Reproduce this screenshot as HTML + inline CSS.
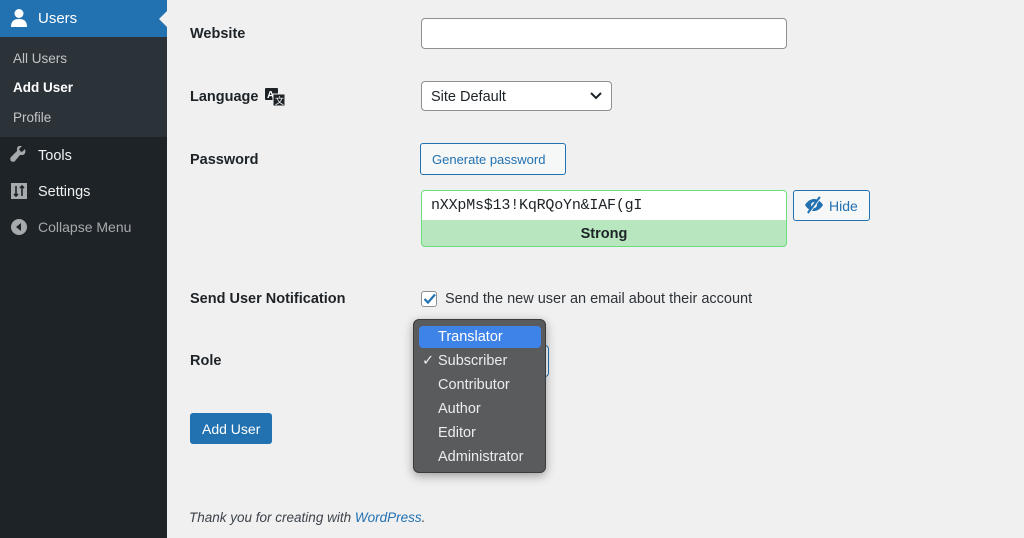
<!DOCTYPE html>
<html><head><style>
*{margin:0;padding:0;box-sizing:border-box}
body{width:1024px;height:538px;overflow:hidden;background:#f0f0f1;font-family:"Liberation Sans",sans-serif;color:#1d2327;position:relative}
.side{position:absolute;left:0;top:0;width:167px;height:538px;background:#1d2327}
.users{position:absolute;left:0;top:0;width:167px;height:37px;background:#2271b1;color:#fff;font-size:15px}
.users span{position:absolute;left:38px;top:10px}
.arrow{position:absolute;right:0;top:11px;width:0;height:0;border-top:8px solid transparent;border-bottom:8px solid transparent;border-right:8px solid #f0f0f1}
.sub{position:absolute;left:0;top:37px;width:167px;height:100px;background:#2c3338;font-size:13.5px}
.sub div{position:absolute;left:13px;color:#c3c4c7}
.m{position:absolute;left:38px;color:#f0f0f1;font-size:14.5px}
.a{position:absolute;font-size:14.5px;font-weight:bold}
.box{position:absolute;background:#fff;border:1px solid #8c8f94;border-radius:4px}
.btn{position:absolute;border:1px solid #2271b1;color:#2271b1;border-radius:3px;background:#f6f7f7;font-size:13px}
.dd{position:absolute;left:413px;top:319px;width:133px;height:154px;background:#5a5b5d;border:1px solid #3a3b3d;border-radius:6px;box-shadow:0 3px 10px rgba(0,0,0,.35);color:#ececec;font-size:14.5px}
.dd div{position:absolute;left:24px}
</style></head><body>
<div class="side">
 <div class="users">
  <svg style="position:absolute;left:10px;top:8px" width="18" height="20" viewBox="0 0 18 20"><circle cx="9" cy="5.5" r="4.5" fill="#fff"/><path d="M1 19c0-6 3-8 8-8s8 2 8 8z" fill="#fff"/></svg>
  <span>Users</span><div class="arrow"></div></div>
 <div class="sub"><div style="top:14px">All Users</div><div style="top:43px;color:#fff;font-weight:bold">Add User</div><div style="top:73px">Profile</div></div>
 <svg style="position:absolute;left:10px;top:146px" width="17" height="17" viewBox="0 0 17 17"><path d="M15 3l-3 3-2-1-1-2 3-3c-2-1-5 0-5 3 0 1 0 1 0 2L1 11c-1 1-1 3 0 4s3 1 4 0l5-6c1 0 1 0 2 0 3 0 4-3 3-6z" fill="#a7aaad"/></svg>
 <div class="m" style="top:148px">Tools</div>
 <svg style="position:absolute;left:11px;top:183px" width="16" height="16" viewBox="0 0 16 16"><rect width="16" height="16" fill="#a7aaad"/><path d="M5 3v10M3 11l2 2 2-2M11 3v10M9 5l2-2 2 2" stroke="#1d2327" stroke-width="1.6" fill="none"/></svg>
 <div class="m" style="top:184px">Settings</div>
 <svg style="position:absolute;left:10px;top:218px" width="18" height="18" viewBox="0 0 18 18"><circle cx="9" cy="9" r="8" fill="#a7aaad"/><path d="M11 5v8L6 9z" fill="#1d2327"/></svg>
 <div class="m" style="top:219px;color:#a7aaad;font-size:14px">Collapse Menu</div>
</div>

<div class="a" style="left:190px;top:26px">Website</div>
<div class="box" style="left:421px;top:18px;width:366px;height:31px"></div>

<div class="a" style="left:190px;top:89px">Language</div>
<svg style="position:absolute;left:264px;top:88px" width="22" height="19" viewBox="0 0 22 19"><rect x="1" y="0" width="13" height="12" rx="1" fill="#1d2327"/><text x="3" y="10" font-size="10" font-weight="bold" fill="#fff" font-family="Liberation Sans">A</text><rect x="9" y="6" width="12" height="12" fill="#1d2327" stroke="#f0f0f1"/><text x="11" y="16" font-size="9" fill="#fff" font-family="Liberation Sans">文</text></svg>
<div class="box" style="left:421px;top:81px;width:191px;height:30px;font-size:14.5px;padding:7px 9px">Site Default
 <svg style="position:absolute;right:9px;top:10px" width="12" height="8" viewBox="0 0 12 8"><path d="M1 1l5 5 5-5" stroke="#1d2327" stroke-width="2" fill="none"/></svg></div>

<div class="a" style="left:190px;top:152px">Password</div>
<div class="btn" style="left:420px;top:143px;width:146px;height:32px;padding:8px 11px">Generate password</div>

<div style="position:absolute;left:421px;top:190px;width:366px;height:57px;border:1px solid #68de7c;background:#b8e6bf;border-radius:4px"></div>
<div style="position:absolute;left:422px;top:191px;width:364px;height:29px;background:#fff;border-radius:3px 3px 0 0;font-family:'Liberation Mono',monospace;font-size:15px;padding:6px 9px;letter-spacing:-.2px">nXXpMs$13!KqRQoYn&amp;IAF(gI</div>
<div style="position:absolute;left:421px;top:226px;width:366px;text-align:center;font-weight:bold;font-size:14.5px">Strong</div>
<div class="btn" style="left:793px;top:190px;width:77px;height:31px;padding:7px 0 0 35px;font-size:14px">Hide</div>
<svg style="position:absolute;left:804px;top:196px" width="20" height="18" viewBox="0 0 20 18"><path d="M1 9c3-5 7-6 9-6s6 1 9 6c-3 5-7 6-9 6S4 14 1 9z" fill="#2271b1"/><circle cx="10" cy="9" r="3" fill="#f6f7f7"/><path d="M4 17L16 1" stroke="#2271b1" stroke-width="2.4"/><path d="M4 17L16 1" stroke="#f6f7f7" stroke-width=".8" transform="translate(1.3,0.5)"/></svg>

<div class="a" style="left:190px;top:291px">Send User Notification</div>
<div style="position:absolute;left:421px;top:291px;width:16px;height:16px;border:1px solid #8c8f94;border-radius:3px;background:#fff"></div>
<svg style="position:absolute;left:421px;top:290px" width="17" height="17" viewBox="0 0 17 17"><path d="M3.5 9l3.5 3.5 7-8" stroke="#2271b1" stroke-width="2.2" fill="none"/></svg>
<div style="position:absolute;left:445px;top:291px;font-size:14.5px;color:#2c3338">Send the new user an email about their account</div>

<div class="a" style="left:190px;top:353px">Role</div>
<div style="position:absolute;left:420px;top:345px;width:129px;height:32px;border:1px solid #2271b1;border-radius:4px;background:#fff"></div>

<div style="position:absolute;left:190px;top:413px;width:82px;height:31px;background:#2271b1;border-radius:3px;color:#fff;font-size:14px;padding:8px 0 0 12px">Add User</div>

<div class="dd">
 <div style="left:5px;top:6px;width:122px;height:22px;background:#3e83e8;border-radius:4px"></div>
 <div style="top:9px;color:#fff">Translator</div>
 <div style="left:8px;top:33px">✓</div>
 <div style="top:33px">Subscriber</div>
 <div style="top:57px">Contributor</div>
 <div style="top:81px">Author</div>
 <div style="top:105px">Editor</div>
 <div style="top:129px">Administrator</div>
</div>

<div style="position:absolute;left:189px;top:510px;font-size:13.5px;font-style:italic;color:#3c434a">Thank you for creating with <span style="color:#2271b1">WordPress</span>.</div>
</body></html>
